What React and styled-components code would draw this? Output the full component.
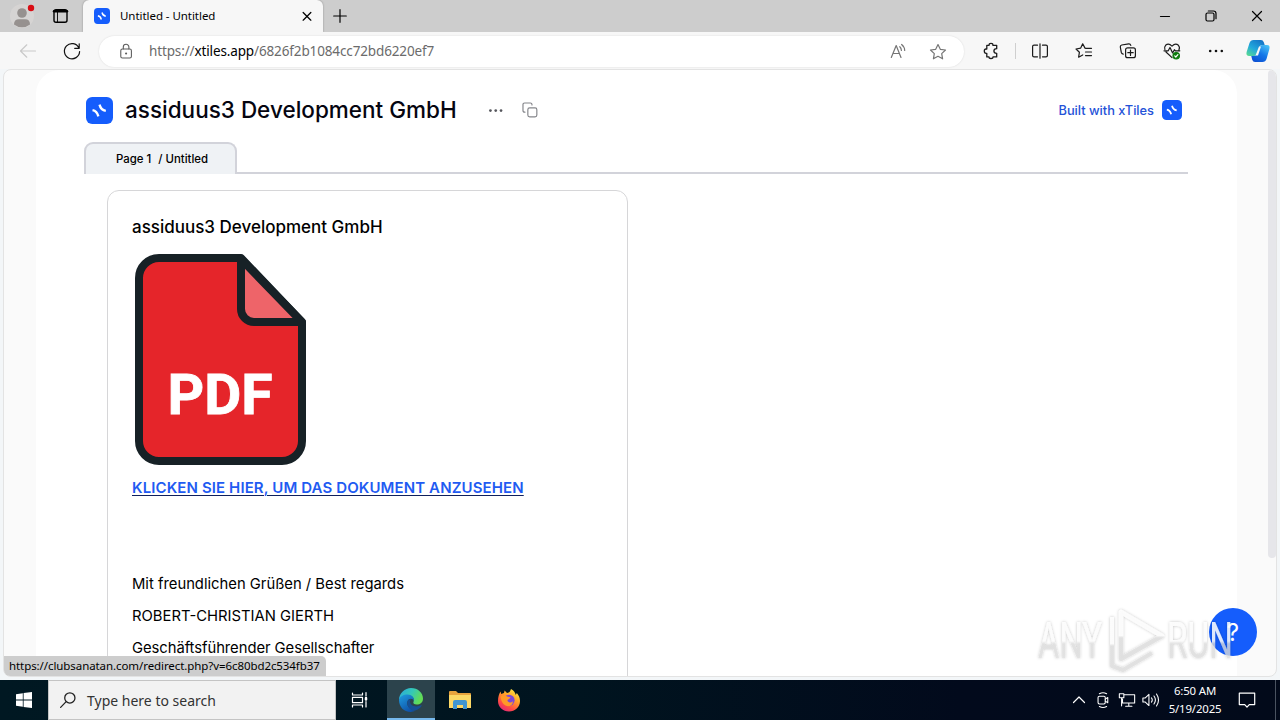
import React from 'react';
import styled, { createGlobalStyle } from 'styled-components';

const GlobalStyle = createGlobalStyle`
  * { box-sizing: border-box; }
  body { margin: 0; overflow: hidden; }
  svg { display: block; flex: none; }
`;

const ui = '"Noto Sans", "Open Sans", sans-serif';
const content = 'Inter, "Liberation Sans", sans-serif';

const Screen = styled.div`
  position: relative;
  width: 1280px;
  height: 720px;
  display: flex;
  flex-direction: column;
  overflow: hidden;
  background: #f3f6f8;
  font-family: ${ui};
  color: #000;
`;

const Slot = styled.div`
  width: ${({ w }) => w || 44}px;
  height: 100%;
  flex: none;
  display: flex;
  align-items: center;
  justify-content: center;
`;

/* browser */

const TabStrip = styled.div`
  height: 32px;
  flex: none;
  display: flex;
  padding-left: 3px;
  background: #cdcdcd;
`;

const BrowserTab = styled.div`
  width: 240px;
  margin-left: 3px;
  padding: 0 9px 0 11px;
  display: flex;
  align-items: center;
  background: #f7f7f7;
  border-radius: 6px 6px 0 0;
  box-shadow: 0 0 2px rgba(0, 0, 0, 0.35);
  font-size: 11.5px;
  letter-spacing: -0.05px;
`;

const TabTitle = styled.span`
  flex: 1;
  margin: -1px 0 0 10px;
`;

const WindowButtons = styled.div`
  display: flex;
  margin-left: auto;
`;

const Toolbar = styled.div`
  position: relative;
  height: 37px;
  flex: none;
  display: flex;
  padding-left: 6px;
  background: #f7f7f7;
`;

const AddressBar = styled.div`
  width: 865px;
  height: 31px;
  margin: 4px 5px 0 6px;
  display: flex;
  align-items: center;
  padding: 0 6px 0 18px;
  border-radius: 16px;
  background: #fff;
  box-shadow: 0 0 2px rgba(0, 0, 0, 0.12);
`;

const Url = styled.div`
  flex: 1;
  margin: -2px 0 0 14px;
  font-size: 13.5px;
  letter-spacing: -0.13px;
  color: #6b6b6b;
  b { font-weight: 400; color: #000; }
`;

const ToolbarDivider = styled.div`
  width: 1px;
  height: 16px;
  margin: 11px 2px 0;
  background: #cfcfcf;
`;

/* page */

const Viewport = styled.div`
  width: 1274px;
  height: 608px;
  margin-left: 3px;
  flex: none;
  display: flex;
  border: 1px solid #e3e3e3;
  border-radius: 8px;
  overflow: hidden;
  background: #fafafa;
  font-family: ${content};
`;

const Board = styled.main`
  width: 1201px;
  margin-left: 32px;
  padding: 26px 49px 0 48px;
  border-radius: 24px 24px 0 0;
  background: #fff;
`;

const Scrollbar = styled.div`
  width: 8px;
  height: 488px;
  margin-left: auto;
  border-radius: 4px;
  background: #e6e6ea;
`;

const Header = styled.header`
  height: 28px;
  display: flex;
  align-items: center;
  padding: 0 6px 0 2px;
`;

const Title = styled.h1`
  width: 333px;
  margin: -1px 29px 0 12px;
  font-size: 22.5px;
  line-height: 28px;
  font-weight: 500;
  white-space: nowrap;
  color: #050510;
`;

const BuiltWith = styled.div`
  margin-left: auto;
  display: flex;
  align-items: center;
  gap: 8px;
  font-size: 12.8px;
  font-weight: 500;
  color: #2452d8;
`;

const PageTabs = styled.div`
  display: flex;
  height: 32px;
  margin-top: 18px;
`;

const PageTab = styled.div`
  width: 153px;
  height: 32px;
  display: flex;
  align-items: center;
  justify-content: center;
  gap: 7px;
  padding: 0 0 1px 3px;
  border: 2px solid #d2d3da;
  border-bottom: 0;
  border-radius: 9px 9px 0 0;
  background: #eff2f5;
  font-size: 11.4px;
  font-weight: 500;
`;

const TabsLine = styled.div`
  flex: 1;
  border-bottom: 2px solid #d2d3da;
`;

const Card = styled.section`
  width: 521px;
  height: 520px;
  margin: 16px 0 0 23px;
  padding: 24px;
  border: 1px solid #d6d6d8;
  border-radius: 12px;
`;

const CardTitle = styled.h2`
  margin: 0 0 14px;
  font-size: 17px;
  line-height: 25px;
  font-weight: 500;
`;

const PdfImage = styled.div`
  padding-left: 3px;
  margin-bottom: 6px;
`;

const DocLink = styled.a`
  display: block;
  height: 32px;
  line-height: 32px;
  font-size: 15px;
  font-weight: 600;
  letter-spacing: 0.11px;
  color: #1f5bf2;
  text-decoration: underline;
  text-decoration-color: #10205c;
  text-decoration-thickness: 1px;
  text-underline-offset: 2px;
  white-space: nowrap;
`;

const Line = styled.p`
  height: 32px;
  margin: 0;
  font-size: 14.8px;
  line-height: 32px;
  letter-spacing: ${({ $tight }) => ($tight ? '-0.05px' : 'normal')};
`;

/* overlays */

const StatusBubble = styled.div`
  position: absolute;
  left: 4px;
  top: 656px;
  width: 322px;
  height: 20px;
  padding-left: 5px;
  border-radius: 0 5px 0 6px;
  background: #cdcdcd;
  font-size: 11.5px;
  line-height: 19px;
  letter-spacing: -0.08px;
  white-space: nowrap;
`;

const HelpButton = styled.div`
  position: absolute;
  left: 1209px;
  top: 608px;
  width: 48px;
  height: 48px;
  border-radius: 50%;
  background: #155dfc;
  color: #fff;
  font: 400 24px/49px ${content};
  text-align: center;
`;

const Watermark = styled.div`
  position: absolute;
  left: 1030px;
  top: 600px;
`;

/* taskbar */

const Taskbar = styled.div`
  height: 40px;
  margin-top: auto;
  flex: none;
  display: flex;
  background: linear-gradient(90deg, #001822 0%, #00141f 45%, #020a1c 75%, #020a1a 100%);
`;

const SearchBox = styled.div`
  width: 288px;
  display: flex;
  align-items: center;
  padding-left: 11px;
  gap: 11px;
  border: 1px solid #c4c4c4;
  background: #f2f2f2;
  font-size: 14px;
  color: #333;
`;

const TaskButton = styled(Slot)`
  margin-right: ${({ gap }) => gap || 1}px;
  background: ${({ $active }) => ($active ? '#2c434c' : 'transparent')};
  box-shadow: ${({ $active }) => ($active ? 'inset 0 -2px #76b9ed' : 'none')};
`;

const Tray = styled.div`
  margin-left: auto;
  display: flex;
`;

const Clock = styled.div`
  width: 64px;
  display: flex;
  flex-direction: column;
  justify-content: center;
  font-size: 11.4px;
  line-height: 18px;
  letter-spacing: -0.15px;
  text-align: center;
  color: #fff;
`;

const ShowDesktop = styled.div`
  width: 5px;
  margin-left: 8px;
  border-left: 1px solid #4a5360;
`;

const Icon = ({ size = 20, color = '#1b1b1b', sw = 1.2, children }) => (
  <svg
    width={size}
    height={size}
    viewBox="0 0 20 20"
    fill="none"
    stroke={color}
    strokeWidth={sw}
    strokeLinecap="round"
    strokeLinejoin="round"
  >
    {children}
  </svg>
);

const TilesLogo = ({ size }) => (
  <svg width={size} height={size} viewBox="0 0 24 24">
    <rect width="24" height="24" rx="5.5" fill="#155dfc" />
    <g fill="none" stroke="#fff" strokeWidth="2.1">
      <path d="M5.8 11.6Q9.8 12.4 11 17.2" />
      <path d="M12 6.8Q13.2 11.6 17.6 12.4" />
    </g>
  </svg>
);

const PdfIcon = () => (
  <svg width="172" height="212" viewBox="0 0 172 212">
    <path
      d="M24 4H106L167 68V187A20 20 0 0 1 147 207H24A20 20 0 0 1 4 187V24A20 20 0 0 1 24 4Z"
      fill="#e5252a"
      stroke="#172126"
      strokeWidth="8"
      strokeLinejoin="round"
    />
    <path
      d="M106 5V55A13 13 0 0 0 119 68H167Z"
      fill="#ee6469"
      stroke="#172126"
      strokeWidth="8"
      strokeLinejoin="round"
    />
    <text
      x="32.5"
      y="160"
      textLength="105"
      lengthAdjust="spacingAndGlyphs"
      fontFamily="Roboto, sans-serif"
      fontWeight="700"
      fontSize="56"
      fill="#fff"
      stroke="#fff"
      strokeWidth="0.8"
    >
      PDF
    </text>
  </svg>
);

const EdgeIcon = () => (
  <svg width="26" height="26" viewBox="0 0 26 26">
    <defs>
      <linearGradient id="edgeTop" x1="0" y1="0" x2="1" y2="0.4">
        <stop offset="0" stopColor="#2aa7de" />
        <stop offset="0.55" stopColor="#34c8b8" />
        <stop offset="1" stopColor="#62dc55" />
      </linearGradient>
      <linearGradient id="edgeBody" x1="0" y1="0" x2="0.6" y2="1">
        <stop offset="0" stopColor="#1f9de0" />
        <stop offset="1" stopColor="#0f52a8" />
      </linearGradient>
    </defs>
    <path d="M1 13C1 6 7 1 13 1C20 1 25 6 25 11.5C25 15.5 22 17.5 18.8 17.5C16 17.5 15 16.3 15.4 15.2C17 12 14.5 8.5 10.5 8.5C5.5 8.5 2 11 1 13Z" fill="url(#edgeTop)" />
    <path d="M1 13C1.5 9.5 5.5 7.6 9.5 7.6C14 7.6 16.6 11 16 14C15 11.2 11 11 9.6 14C8 18 11.5 23 17 23.6C15.8 24.6 14.2 25 12.6 25C6 25 1 20 1 13Z" fill="url(#edgeBody)" />
    <path d="M9.6 14C8.2 18.5 12 24 17.2 23.6C20 22.8 22.6 20.8 23.7 18.8C24 18.2 23.5 18 23 18.3C18 20.8 12.5 19 12 14.8C12 13.7 12.4 12.9 13 12.3C11.6 12 10.2 12.8 9.6 14Z" fill="#164f94" />
  </svg>
);

const ExplorerIcon = () => (
  <svg width="22" height="20" viewBox="0 0 22 20">
    <path d="M0 2Q0 1 1 1H7L9 3H21Q22 3 22 4V8H0Z" fill="#e8a33d" />
    <path d="M0 5H22V18H0Z" fill="#fcd866" />
    <path d="M4 19V12Q4 10 6 10H16Q18 10 18 12V19H14V15H8V19Z" fill="#3f96d2" />
  </svg>
);

const FirefoxIcon = () => (
  <svg width="24" height="24" viewBox="0 0 24 24">
    <defs>
      <linearGradient id="foxBody" x1="0.85" y1="0" x2="0.25" y2="1">
        <stop offset="0" stopColor="#fff044" />
        <stop offset="0.4" stopColor="#ffa229" />
        <stop offset="0.75" stopColor="#ff4a45" />
        <stop offset="1" stopColor="#e22879" />
      </linearGradient>
    </defs>
    <path d="M3.5 3.5L4.2 6L7 5L7.6 2.5L10 5C12 5 13 4 14 1C17 2.5 18.3 5 18.8 7L19.8 5C22 7.5 23 10 23 13C23 19 18 23.5 12 23.5C6 23.5 1 19 1 13C1 9 2 6 3.5 3.5Z" fill="url(#foxBody)" />
    <circle cx="12" cy="12.3" r="5.6" fill="#7b48d8" />
    <path d="M3.6 8.5C6 6.5 8.5 7 10 8.6L13.5 9.3C13 11 11 11 10.4 12.2C10.8 14.5 13.6 15.3 16 13.2C15.8 17.5 12 19 9 17.7C5.5 16.3 4 12.5 3.6 8.5Z" fill="#ff9a27" />
  </svg>
);

const CopilotIcon = () => (
  <svg width="24" height="24" viewBox="0 0 24 24">
    <defs>
      <linearGradient id="pilotA" x1="0.7" y1="0" x2="0" y2="1">
        <stop offset="0" stopColor="#1677c8" />
        <stop offset="0.5" stopColor="#22a8dc" />
        <stop offset="1" stopColor="#5ee08a" />
      </linearGradient>
      <linearGradient id="pilotB" x1="0.8" y1="0" x2="0.2" y2="1">
        <stop offset="0" stopColor="#46bff5" />
        <stop offset="0.5" stopColor="#1477e8" />
        <stop offset="1" stopColor="#0d4fd2" />
      </linearGradient>
    </defs>
    <path d="M7.5 1H15Q17 1 17.8 3.3L18.7 6H16.5Q14 6 13.2 8.3L11 15Q10.2 17 8 17H3Q-.4 17 .7 12.8L3.5 4Q4.5 1 7.5 1Z" fill="url(#pilotA)" />
    <path d="M16.5 23H9Q7 23 6.2 20.7L5.3 17H8Q10.2 17 11 15L13.2 8.3Q14 6 16.5 6H21Q24.4 6 23.3 10.2L20.5 20Q19.5 23 16.5 23Z" fill="url(#pilotB)" />
    <path d="M13 7.5H15L12 16.5H9.5Z" fill="#f7f7f7" />
  </svg>
);

const star = 'M10 2.6L12.3 7.3L17.5 8L13.7 11.6L14.6 16.8L10 14.3L5.4 16.8L6.3 11.6L2.5 8L7.7 7.3Z';

const Browser = () => (
  <>
    <TabStrip>
      <Slot w={38}>
        <svg width="26" height="26" viewBox="0 0 26 26">
          <circle cx="13" cy="13" r="12" fill="#d6d4d3" />
          <circle cx="13" cy="10" r="4.8" fill="#96918f" />
          <path d="M5 21.5Q5 16.2 10 16.2H16Q21 16.2 21 21.5Q17.5 24.3 13 24.3T5 21.5Z" fill="#96918f" />
          <circle cx="22" cy="5" r="3.2" fill="#d90d14" />
        </svg>
      </Slot>
      <Slot w={39}>
        <Icon color="#000" sw={1.4}>
          <rect x="3" y="3.7" width="13" height="12.6" rx="2" />
          <path d="M3 5.3H16" strokeWidth="2.4" />
          <path d="M6.5 6V16" strokeWidth="0.9" />
        </Icon>
      </Slot>
      <BrowserTab>
        <TilesLogo size={16} />
        <TabTitle>Untitled - Untitled</TabTitle>
        <Icon size={14} color="#000" sw={1.8}>
          <path d="M4.5 5L15.5 16M15.5 5L4.5 16" />
        </Icon>
      </BrowserTab>
      <Slot w={34}>
        <Icon color="#000"><path d="M3.7 10H16.3M10 3.7V16.3" /></Icon>
      </Slot>
      <WindowButtons>
        <Slot w={46}><Icon color="#000"><path d="M5.5 10.5H14.5" /></Icon></Slot>
        <Slot w={46}>
          <Icon color="#000">
            <rect x="5" y="7" width="8" height="8" rx="1.5" />
            <path d="M7.3 5H12.5Q15 5 15 7.5V12.7" />
          </Icon>
        </Slot>
        <Slot w={46}><Icon color="#000"><path d="M5.5 5.5L14.5 14.5M14.5 5.5L5.5 14.5" /></Icon></Slot>
      </WindowButtons>
    </TabStrip>

    <Toolbar>
      <Slot><Icon color="#c9c9c9"><path d="M17.5 10H2.5M8.8 3.8L2.5 10L8.8 16.2" /></Icon></Slot>
      <Slot w={43}>
        <Icon color="#111">
          <path d="M16.9 7A7.6 7.6 0 1 0 17.6 10.5M17.2 2.8V7.3H12.7" />
        </Icon>
      </Slot>
      <AddressBar>
        <Icon size={18} color="#5c5c5c">
          <rect x="4.2" y="6.7" width="11.8" height="10" rx="1.8" />
          <path d="M7 6.5V4.5A3.1 3.1 0 0 1 13.2 4.5V6.5" />
          <circle cx="10.1" cy="11.7" r="0.6" />
        </Icon>
        <Url>https://<b>xtiles.app</b>/6826f2b1084cc72bd6220ef7</Url>
        <Slot w={40}>
          <Icon color="#757575">
            <path d="M3.3 15.5L8.2 3.5L13 15.5M5 11.5H11.4M11.8 4.7Q13.3 6.1 13.4 8.5M13.6 2.5Q16.6 4.9 16.7 8.5" />
          </Icon>
        </Slot>
        <Slot w={40}><Icon color="#757575"><path d={star} /></Icon></Slot>
      </AddressBar>
      <Slot>
        <Icon sw={1.3}>
          <path d="M5.8 4.3H8.1Q8 2.3 10 2.3T11.9 4.3H15.7V7.7Q12.9 7.7 12.9 10T15.7 12.3V15.9H12Q12 17.5 10 17.5T8 15.9H5.8V12.3H5.1Q3.3 12.3 3.3 10.1T5.1 8H5.8Z" />
        </Icon>
      </Slot>
      <ToolbarDivider />
      <Slot>
        <Icon>
          <path d="M7.5 4.2H4Q2.6 4.2 2.6 5.6V14.4Q2.6 15.8 4 15.8H7.5M12.5 4.2H16Q17.4 4.2 17.4 5.6V14.4Q17.4 15.8 16 15.8H12.5M10 2.8V17.2" />
        </Icon>
      </Slot>
      <Slot>
        <Icon>
          <path d="M11 7.1L8.7 2.8L6.6 7.2L2 8L5.4 11.3L4.6 16.2L8.7 13.9M11.5 7.3H17.5M11.5 11H17.5M11.5 14.6H17.5" />
        </Icon>
      </Slot>
      <Slot>
        <Icon>
          <rect x="7.6" y="6.8" width="9.8" height="9.9" rx="2" />
          <path d="M12.5 9V14.4M9.8 11.7H15.2M5.2 13.1Q3.6 12.8 3.3 11.4L2.3 6Q2.1 4.4 3.7 4L10.7 2.8Q12.3 2.6 12.8 4.4" />
        </Icon>
      </Slot>
      <Slot>
        <Icon>
          <path d="M4 11L10 16.6M16.9 9Q18.2 6.2 16.4 4.3Q13.4 1.8 10 5.1Q6.6 1.8 3.6 4.3Q1.9 6.2 2.9 8.5M2 9.8H6.2L8 6.5L10.6 12L12.4 8.7L13.3 9.8H17.8" />
          <circle cx="14.2" cy="14.8" r="3.2" fill="#107c10" stroke="#107c10" />
          <path d="M12.7 14.9L13.8 16L15.9 13.7" stroke="#fff" />
        </Icon>
      </Slot>
      <Slot>
        <Icon>
          <g fill="#111" stroke="none">
            <circle cx="4.2" cy="10" r="1.3" />
            <circle cx="10" cy="10" r="1.3" />
            <circle cx="15.8" cy="10" r="1.3" />
          </g>
        </Icon>
      </Slot>
      <Slot w={40}><CopilotIcon /></Slot>
    </Toolbar>
  </>
);

const Page = () => (
  <Viewport>
    <Board>
      <Header>
        <TilesLogo size={27} />
        <Title>assiduus3 Development GmbH</Title>
        <Icon size={18}>
          <g fill="#55565c" stroke="none">
            <circle cx="3.8" cy="10.6" r="1.5" />
            <circle cx="9.7" cy="10.6" r="1.5" />
            <circle cx="15.6" cy="10.6" r="1.5" />
          </g>
        </Icon>
        <Slot w={50}>
          <Icon size={18} color="#84858a" sw={1.3}>
            <rect x="7.6" y="7.6" width="10" height="10" rx="2" />
            <path d="M4.4 12.4H4Q2.2 12.4 2.2 10.6V4Q2.2 2.2 4 2.2H10.4Q12.2 2.2 12.2 4V4.4" />
          </Icon>
        </Slot>
        <BuiltWith>
          Built with xTiles
          <TilesLogo size={20} />
        </BuiltWith>
      </Header>
      <PageTabs>
        <PageTab>
          <span>Page 1</span>
          <span>/ Untitled</span>
        </PageTab>
        <TabsLine />
      </PageTabs>
      <Card>
        <CardTitle>assiduus3 Development GmbH</CardTitle>
        <PdfImage><PdfIcon /></PdfImage>
        <DocLink>KLICKEN SIE HIER, UM DAS DOKUMENT ANZUSEHEN</DocLink>
        <Line />
        <Line />
        <Line>Mit freundlichen Grüßen / Best regards</Line>
        <Line>ROBERT-CHRISTIAN GIERTH</Line>
        <Line $tight>Geschäftsführender Gesellschafter</Line>
      </Card>
    </Board>
    <Scrollbar />
  </Viewport>
);

const AnyRun = () => (
  <Watermark>
    <svg width="220" height="80" viewBox="0 0 220 80" overflow="visible">
      <defs>
        <linearGradient id="markFill" x1="0" y1="0" x2="0" y2="1">
          <stop offset="0.5" stopColor="#fff" stopOpacity="0.85" />
          <stop offset="0.55" stopColor="#dedede" stopOpacity="0.75" />
        </linearGradient>
        <filter id="markShadow" x="-10%" y="-10%" width="120%" height="120%">
          <feDropShadow dx="0" dy="0" stdDeviation="1.5" floodColor="#000" floodOpacity="0.28" />
        </filter>
      </defs>
      <g filter="url(#markShadow)">
        <g fill="url(#markFill)" fontFamily="Roboto, sans-serif" fontSize="50" fontWeight="400">
          <text x="8" y="58" textLength="64" lengthAdjust="spacingAndGlyphs">ANY</text>
          <text x="137" y="58" textLength="66" lengthAdjust="spacingAndGlyphs">RUN</text>
        </g>
        <g fill="none" stroke="url(#markFill)" strokeWidth="4.5" strokeLinejoin="round">
          <path d="M91 57V12L132 36L91 59Z" />
          <path d="M82 17V66L93 70L122 53" strokeWidth="4" />
        </g>
      </g>
    </svg>
  </Watermark>
);

const App = () => (
  <Screen>
    <GlobalStyle />
    <Browser />
    <Page />
    <StatusBubble>https://clubsanatan.com/redirect.php?v=6c80bd2c534fb37</StatusBubble>
    <HelpButton>?</HelpButton>
    <AnyRun />
    <Taskbar>
      <Slot w={48}>
        <svg width="16" height="16" viewBox="0 0 16 16" fill="#fff">
          <path d="M0 2.2L6.8 1.2V7.5H0ZM7.6 1.1L16 0V7.5H7.6ZM0 8.4H6.8V14.8L0 13.8ZM7.6 8.4H16V16L7.6 14.9Z" />
        </svg>
      </Slot>
      <SearchBox>
        <Icon size={16} color="#222" sw={1.6}>
          <circle cx="12.3" cy="7.4" r="6.4" />
          <path d="M7.7 12L0.8 19.2" />
        </Icon>
        Type here to search
      </SearchBox>
      <TaskButton w={48} gap={3}>
        <Icon color="#fff">
          <path d="M2.5 3V5H12.5V3M2.5 17V15H12.5V17M2.5 7.3H12.5V12.7H2.5ZM16 2.5V6M16 11.5V17" />
          <path d="M16 8V9.5" strokeWidth="2.5" />
        </Icon>
      </TaskButton>
      <TaskButton w={48} $active><EdgeIcon /></TaskButton>
      <TaskButton w={48}><ExplorerIcon /></TaskButton>
      <TaskButton w={48}><FirefoxIcon /></TaskButton>
      <Tray>
        <Slot w={24}><Icon color="#fff"><path d="M4.5 12.5L10 7L15.5 12.5" /></Icon></Slot>
        <Slot w={24}>
          <Icon size={18} color="#fff">
            <rect x="4.5" y="5.8" width="8" height="8.6" rx="1.5" />
            <path d="M12.5 9L15.3 7.2V13L12.5 11.2M6 3Q10 .8 14 3M6 17.2Q10 19.4 14 17.2" />
          </Icon>
        </Slot>
        <Slot w={24}>
          <Icon size={18} color="#fff">
            <path d="M6.5 4.2H18.5V13.4H5V9M12 13.4V17M8.5 17H15.5M1.5 3H6.5V7.5H1.5ZM4 7.5V16.5" />
          </Icon>
        </Slot>
        <Slot w={24}>
          <Icon size={18} color="#fff">
            <path d="M1 7.7H3.7L7.7 3.8V16.2L3.7 12.3H1ZM10.5 7.7Q12.3 10 10.5 12.3M13.3 5.5Q16.5 10 13.3 14.5M16.1 3.3Q20.6 10 16.1 16.7" />
          </Icon>
        </Slot>
        <Clock>
          <span>6:50 AM</span>
          <span>5/19/2025</span>
        </Clock>
        <Slot w={40}>
          <Icon color="#fff">
            <path d="M2.3 3.2H17.7V14.6H12.3L10 17.2L7.7 14.6H2.3Z" />
          </Icon>
        </Slot>
        <ShowDesktop />
      </Tray>
    </Taskbar>
  </Screen>
);

export default App;
